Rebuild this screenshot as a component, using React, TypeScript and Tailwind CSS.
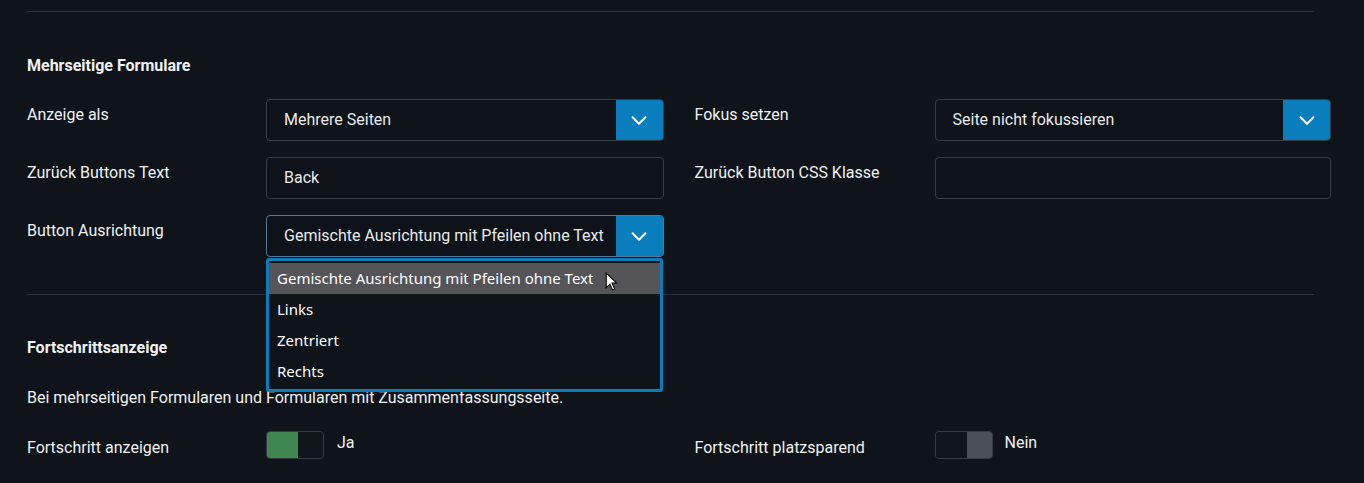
import React from "react";

function Chevron() {
  return (
    <svg width="22" height="22" viewBox="0 0 24 24" fill="none" stroke="currentColor" strokeWidth={2.2} strokeLinecap="round" strokeLinejoin="round">
      <path d="M5 9l7 7 7-7" />
    </svg>
  );
}

function Select({ value, focused = false }: { value: string; focused?: boolean }) {
  return (
    <div
      className={`flex h-[42px] w-full overflow-hidden rounded-[4px] border bg-[#0e1319] ${
        focused ? "border-[#58779a]" : "border-[#363c44]"
      }`}
    >
      <div className="flex flex-1 items-center pl-[17px] text-[16px] text-[#e8eaec]">{value}</div>
      <div className="flex w-[47px] items-center justify-center bg-[#0a7ebd] text-white">
        <Chevron />
      </div>
    </div>
  );
}

function Input({ value }: { value?: string }) {
  return (
    <div className="flex h-[42px] w-full items-center rounded-[4px] border border-[#363c44] bg-[#0e1319] pl-[17px] text-[16px] text-[#e8eaec]">
      {value}
    </div>
  );
}

function Field({ label, children, labelWidth = "w-[239px]" }: { label?: string; children?: React.ReactNode; labelWidth?: string }) {
  return (
    <div className="flex">
      <div className={`${labelWidth} pt-[4px] leading-6`}>{label}</div>
      <div className="relative flex-1">{children}</div>
    </div>
  );
}

function Toggle({ on }: { on: boolean }) {
  return (
    <div className="flex h-[28px] w-[58px] overflow-hidden rounded-[4px] border border-[#363c44]">
      <div className={`w-[31px] ${on ? "bg-[#3e8752]" : "bg-[#10151c]"}`} />
      <div className={`flex-1 ${on ? "bg-[#10151c]" : "bg-[#4b4f56]"}`} />
    </div>
  );
}

const OPTIONS = ["Gemischte Ausrichtung mit Pfeilen ohne Text", "Links", "Zentriert", "Rechts"];

export default function App() {
  return (
    <div className="min-h-screen bg-[#0f141b] pl-[27px] pr-[33px] font-['Roboto',sans-serif] text-[16px] text-[#f0f1f2]">
      <div className="h-[11px]" />
      <div className="mr-[17px] h-px bg-[#2c323a]" />

      {/* Mehrseitige Formulare */}
      <h2 className="mt-[42px] text-[16px] font-bold leading-6">Mehrseitige Formulare</h2>

      <div className="mt-[21px] grid grid-cols-2 gap-x-[31px] gap-y-[16px]">
        <Field label="Anzeige als">
          <Select value="Mehrere Seiten" />
        </Field>
        <Field label="Fokus setzen" labelWidth="w-[240px]">
          <Select value="Seite nicht fokussieren" />
        </Field>
        <Field label="Zurück Buttons Text">
          <Input value="Back" />
        </Field>
        <Field label="Zurück Button CSS Klasse" labelWidth="w-[240px]">
          <Input />
        </Field>
        <Field label="Button Ausrichtung">
          <Select value="Gemischte Ausrichtung mit Pfeilen ohne Text" focused />
          <div className="absolute left-0 top-[43px] z-10 w-[397px] rounded-[3px] border-[3px] border-[#0b7cb8] bg-[#0f141b] py-[2px] font-['Noto_Sans',sans-serif] text-[15px] text-white">
            {OPTIONS.map((o, i) => (
              <div
                key={o}
                className={`flex h-[31px] items-center pl-[8px] ${i === 0 ? "bg-[#555459]" : ""}`}
              >
                {o}
                {i === 0 && (
                  <svg className="ml-[12px] mt-[6px]" width="13" height="19" viewBox="0 0 12 18">
                    <path d="M1 1 L1 15 L4.5 11.5 L7 17 L9 16 L6.5 10.5 L11 10.5 Z" fill="#fff" stroke="#000" strokeWidth="1" />
                  </svg>
                )}
              </div>
            ))}
          </div>
        </Field>
        <div />
      </div>

      <div className="mr-[17px] mt-[37px] h-px bg-[#2c323a]" />

      {/* Fortschrittsanzeige */}
      <h2 className="mt-[41px] text-[16px] font-bold leading-6">Fortschrittsanzeige</h2>
      <p className="mt-[26px] leading-6">
        Bei mehrseitigen Formularen und Formularen mit Zusammenfassungsseite.
      </p>

      <div className="mt-[21px] grid grid-cols-2 gap-x-[31px]">
        <div className="flex">
          <div className="w-[239px] pt-[5px] leading-6">Fortschritt anzeigen</div>
          <div className="flex items-start gap-[13px]">
            <Toggle on />
            <span className="leading-6">Ja</span>
          </div>
        </div>
        <div className="flex">
          <div className="w-[240px] pt-[5px] leading-6">Fortschritt platzsparend</div>
          <div className="flex items-start gap-[12px]">
            <Toggle on={false} />
            <span className="leading-6">Nein</span>
          </div>
        </div>
      </div>
    </div>
  );
}
